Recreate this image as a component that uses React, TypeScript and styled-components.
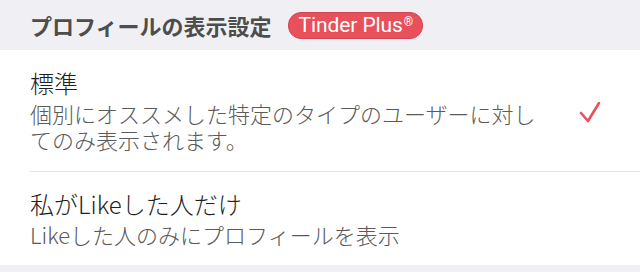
import styled, { createGlobalStyle } from "styled-components";

const GlobalStyle = createGlobalStyle`
  body {
    margin: 0;
    background: #ffffff;
    font-family: "Noto Sans CJK JP", "Noto Sans", sans-serif;
  }
`;

const Page = styled.div`
  width: 640px;
  height: 272px;
  background: #f0f0f4;
  overflow: hidden;
`;

const Header = styled.div`
  height: 50px;
  display: flex;
  align-items: center;
  gap: 16px;
  padding-left: 30px;
  box-sizing: border-box;
`;

const HeaderTitle = styled.h2`
  margin: 0;
  font-size: 22px;
  font-weight: 600;
  color: #4d4d4d;
  line-height: 1;
`;

const Badge = styled.span`
  display: inline-flex;
  align-items: center;
  height: 25px;
  padding: 0 9px 0 10px;
  border-radius: 13px;
  background: #e8505b;
  border: 1px solid #d04452;
  color: #ffffff;
  font-family: "Roboto", "Liberation Sans", Arial, sans-serif;
  font-size: 21px;
  letter-spacing: -0.1px;
  sup {
    font-size: 12px;
    margin-left: 1px;
    align-self: flex-start;
    margin-top: 2px;
  }
`;

const List = styled.div`
  background: #ffffff;
  padding-left: 30px;
`;

const Row = styled.div<{ $last?: boolean }>`
  display: flex;
  align-items: center;
  justify-content: space-between;
  padding-right: 36px;
  border-bottom: ${({ $last }) => ($last ? "none" : "1px solid #e4e4e6")};
  height: ${({ $last }) => ($last ? "93px" : "122px")};
  box-sizing: border-box;
`;

const RowText = styled.div`
  display: flex;
  flex-direction: column;
  gap: 3px;
  max-width: 520px;
`;

const Title = styled.div`
  font-size: 24px;
  font-weight: 300;
  line-height: 28px;
  color: #1f1f1f;
`;

const Description = styled.div`
  font-size: 22px;
  font-weight: 300;
  line-height: 26px;
  color: #5a5a5a;
`;

const Check = () => (
  <svg width="26" height="26" viewBox="0 0 26 26" fill="none">
    <path
      d="M3 15 L10 23 L21 5"
      stroke="#e8505b"
      strokeWidth="2.6"
      strokeLinecap="round"
      strokeLinejoin="round"
    />
  </svg>
);

const App = () => {
  return (
    <Page>
      <GlobalStyle />
      <Header>
        <HeaderTitle>プロフィールの表示設定</HeaderTitle>
        <Badge>
          Tinder Plus<sup>®</sup>
        </Badge>
      </Header>
      <List>
        <Row>
          <RowText>
            <Title>標準</Title>
            <Description>
              個別にオススメした特定のタイプのユーザーに対してのみ表示されます。
            </Description>
          </RowText>
          <Check />
        </Row>
        <Row $last>
          <RowText>
            <Title>私がLikeした人だけ</Title>
            <Description>Likeした人のみにプロフィールを表示</Description>
          </RowText>
        </Row>
      </List>
    </Page>
  );
};

export default App;
